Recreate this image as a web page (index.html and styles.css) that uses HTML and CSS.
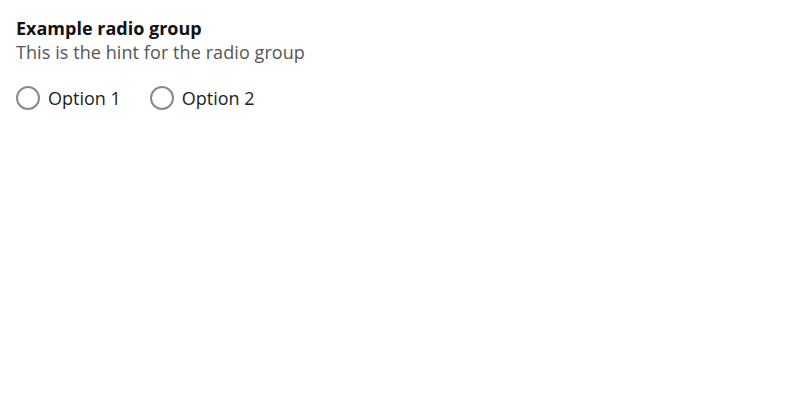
FILE: index.html
```html
<!DOCTYPE html>
<html>
<head>
<meta charset="utf-8">
<link rel="stylesheet" href="styles.css">
</head>
<body>
<div class="group" role="radiogroup">
  <div class="label">Example radio group</div>
  <div class="hint">This is the hint for the radio group</div>
  <div class="options">
    <label class="option"><input type="radio" name="g" class="radio"><span>Option 1</span></label>
    <label class="option"><input type="radio" name="g" class="radio"><span>Option 2</span></label>
  </div>
</div>
</body>
</html>
```

FILE: styles.css
```css
html, body { margin: 0; padding: 0; background: #fff; }
body { font-family: "Open Sans", "Liberation Sans", sans-serif; color: #1d1d1d; }
.group { padding: 16px; }
.label { font-weight: 700; font-size: 18px; line-height: 24px; color: #111; }
.hint { font-size: 18px; line-height: 24px; color: #555; letter-spacing: 0.08px; }
.options { display: flex; gap: 29px; margin-top: 22px; }
.option { display: flex; align-items: center; gap: 8px; font-size: 18px; line-height: 24px; color: #222; }
.radio { appearance: none; margin: 0; width: 24px; height: 24px; border: 2px solid #8a8a8a; border-radius: 50%; box-sizing: border-box; background: #fff; }
```
